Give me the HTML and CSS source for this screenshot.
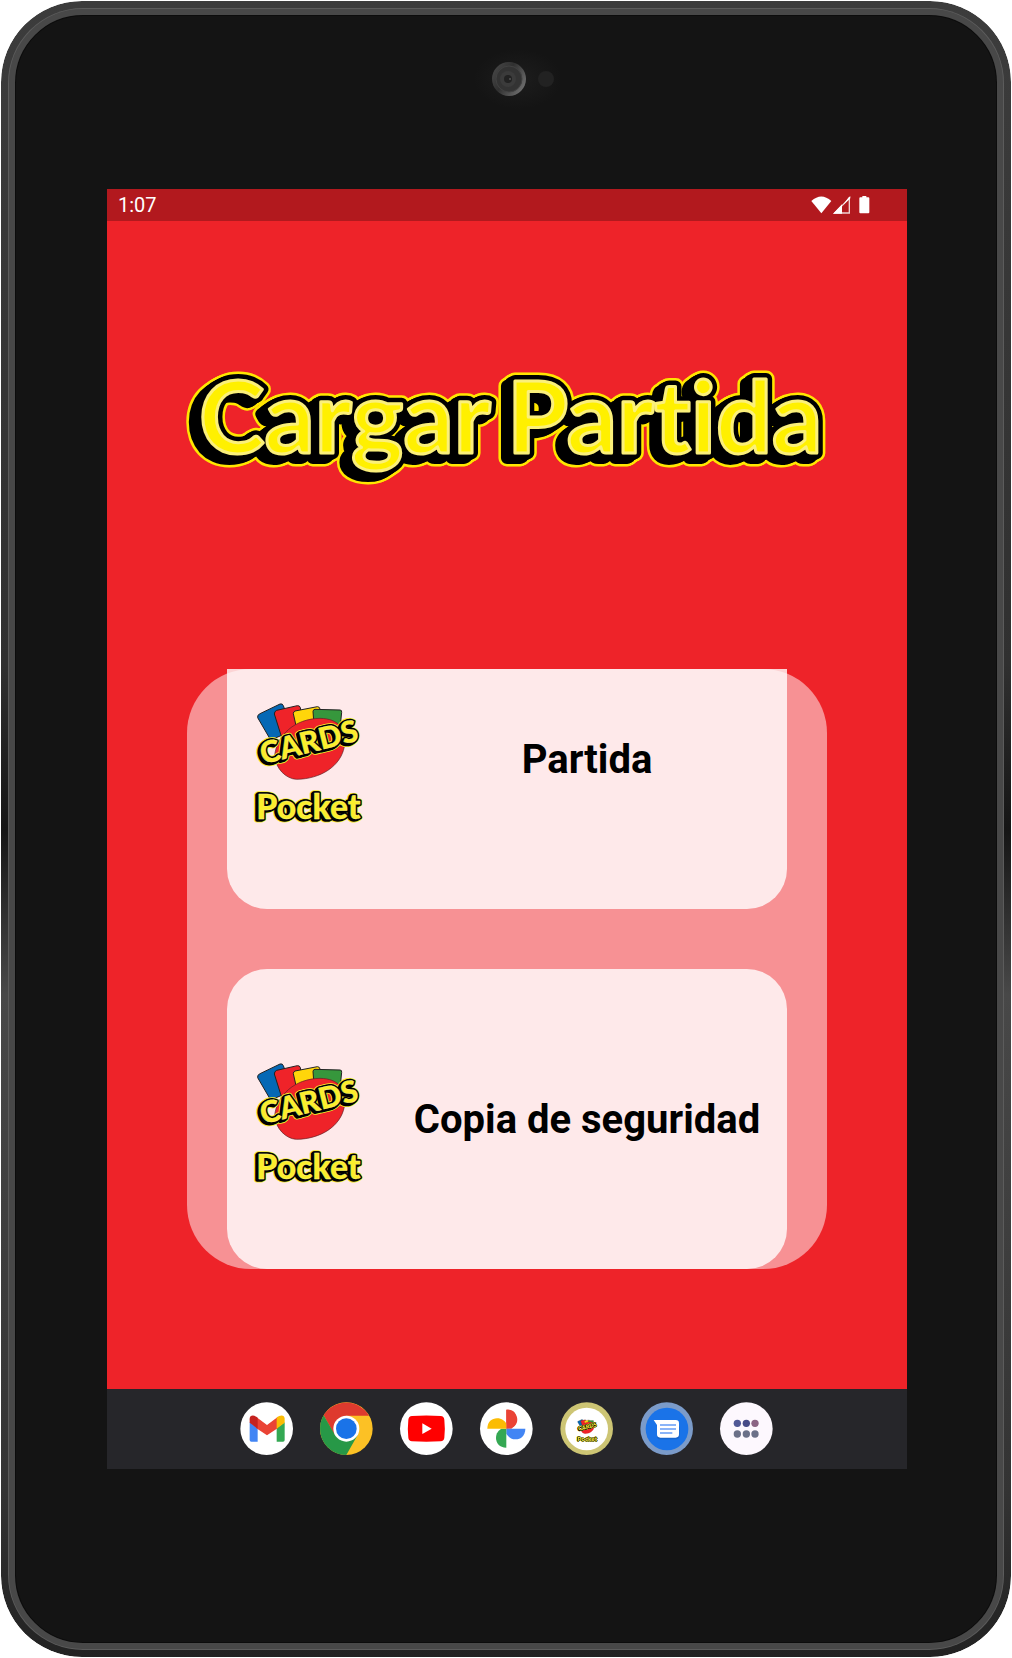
FILE: index.html
```
<!DOCTYPE html>
<html lang="es">
<head>
<meta charset="utf-8">
<meta name="viewport" content="width=device-width, initial-scale=1">
<title>Cargar Partida</title>
<link rel="stylesheet" href="styles.css">
</head>
<body>
<div class="device">
  <div class="bezel">
    <div class="camera-bar">
      <svg class="camera" viewBox="-18 0 110 80" aria-hidden="true">
        <defs>
          <radialGradient id="glow"><stop offset="0" stop-color="#1d1d1d"/><stop offset="1" stop-color="#141414"/></radialGradient>
          <linearGradient id="ring" x1="0" y1="0" x2="1" y2="0.6"><stop offset="0" stop-color="#4c4c4c"/><stop offset="0.5" stop-color="#303030"/><stop offset="1" stop-color="#6a6a6a"/></linearGradient>
        </defs>
        <ellipse cx="48" cy="39" rx="44" ry="30" fill="url(#glow)"/>
        <circle cx="39" cy="39" r="17" fill="url(#ring)"/>
        <circle cx="39" cy="39" r="13" fill="#333" stroke="#424242"/>
        <circle cx="38" cy="39" r="8" fill="#3b3b3b"/>
        <circle cx="38" cy="39" r="4" fill="#222"/>
        <circle cx="40" cy="39" r="1" fill="#555"/>
        <circle cx="76" cy="39" r="8" fill="#222"/>
      </svg>
    </div>
    <div class="screen">
      <header class="status-bar">
        <time>1:07</time>
        <svg class="status-icons" viewBox="92 42 180 60" aria-hidden="true">
          <path fill="#fff" d="M93 60Q123 33 153 60L123 97Z"/>
          <path fill="none" stroke="#fff" stroke-opacity=".8" stroke-width="4" d="M163 96H207V52Z"/>
          <path fill="#fff" d="M158 98L185 70V98ZM205 49L210 46V52L188 72Z"/>
          <path fill="#fff" d="M246 45h12v4h6q3 0 3 3v42q0 3-3 3h-24q-3 0-3-3V52q0-3 3-3h6Z"/>
        </svg>
      </header>
      <main class="app">
        <h1 class="title">
          <svg class="title-art" viewBox="179 360 656 140">
            <g class="halo">
              <use href="#title-text"/><use href="#title-text" x="-2" y="1"/><use href="#title-text" x="-4" y="2"/><use href="#title-text" x="-6" y="4"/><use href="#title-text" x="-8" y="5"/>
            </g>
            <g class="depth">
              <use href="#title-text"/><use href="#title-text" x="-2" y="1"/><use href="#title-text" x="-4" y="2"/><use href="#title-text" x="-6" y="4"/><use href="#title-text" x="-8" y="5"/>
            </g>
            <g class="face"><text id="title-text" y="453"><tspan x="199">Cargar</tspan> <tspan x="507">Partida</tspan></text></g>
          </svg>
        </h1>
        <section class="saves">
          <button class="save" type="button">
            <svg class="logo" viewBox="213 105 336 384" aria-hidden="true">
              <g id="logo">
                <g stroke="#222" stroke-width="3">
                  <path fill="#0568b5" d="M240 161L300 132Q308 130 310 137L338 212L272 240L233 173Q231 165 240 161Z"/>
                  <path fill="#ef2329" d="M290 151L352 137Q359 136 361 143L372 205L305 232L283 162Q283 154 290 151Z"/>
                  <path fill="#ffd50a" d="M345 153L412 140Q419 140 420 147L417 205L352 215L340 161Q340 155 345 153Z"/>
                  <path fill="#36973c" d="M405 148L480 150Q486 150 485 157L480 205L402 195L399 154Q400 148 405 148Z"/>
                </g>
                <path fill="#ef2329" stroke="#5b2025" stroke-width="2" d="M284 287C290 225 345 176 420 175C475 176 500 205 493 260C482 320 420 357 350 358C318 357 286 325 284 287Z"/>
                <g class="small-halo"><use href="#cards"/><use href="#cards" x="-3" y="2"/><use href="#cards" x="-6" y="5"/></g>
                <g class="small-depth"><use href="#cards"/><use href="#cards" x="-3" y="2"/><use href="#cards" x="-6" y="5"/></g>
                <g class="small-face"><g id="cards"><text class="cards-text" transform="translate(249 313) rotate(-14)">CARDS</text></g></g>
                <g class="small-halo"><use href="#pocket"/><use href="#pocket" x="-3" y="2"/><use href="#pocket" x="-6" y="5"/></g>
                <g class="small-depth"><use href="#pocket"/><use href="#pocket" x="-3" y="2"/><use href="#pocket" x="-6" y="5"/></g>
                <g class="small-face"><g id="pocket"><text class="pocket-text" x="229" y="476">Pocket</text></g></g>
              </g>
            </svg>
            <span class="save-name">Partida</span>
          </button>
          <button class="save" type="button">
            <svg class="logo" viewBox="213 105 336 384" aria-hidden="true"><use href="#logo"/></svg>
            <span class="save-name">Copia de seguridad</span>
          </button>
        </section>
      </main>
      <nav class="dock">
        <button class="dock-app" type="button" aria-label="Gmail">
          <svg viewBox="61 67 159 159"><circle cx="141" cy="147" r="79" fill="#fff"/>
            <path fill="#4285f4" d="M90 128L114 145V186H95Q90 186 90 181Z"/>
            <path fill="#34a853" d="M171 145L195 128V181Q195 186 190 186H171Z"/>
            <path fill="#ea4335" d="M109 111L142 136L175 111V145L142 167L109 145Z"/>
            <path fill="#c5221f" d="M90 121C88 105 103 104 114 114V147L90 129Z"/>
            <path fill="#fbbc04" d="M195 121C197 105 182 104 171 114V147L195 129Z"/>
          </svg>
        </button>
        <button class="dock-app" type="button" aria-label="Chrome">
          <svg viewBox="302 67 159 159"><circle cx="381" cy="147" r="79" fill="#fcc125"/>
            <path fill="#de3a2e" d="M313 107A79 79 0 0 1 449 108H381L346 166Z"/>
            <path fill="#279847" d="M313 107A79 79 0 0 0 381 226L415 166L381 174L347 166Z"/>
            <circle cx="381" cy="147" r="39" fill="#fff"/><circle cx="381" cy="147" r="31" fill="#1a73e8"/>
          </svg>
        </button>
        <button class="dock-app" type="button" aria-label="YouTube">
          <svg viewBox="542 67 159 159"><circle cx="621" cy="147" r="79" fill="#fff"/>
            <path fill="#f00" d="M578 109Q621 106 664 109Q674 110 675 120Q678 147 675 174Q674 184 664 185Q621 187 578 185Q568 184 567 174Q564 147 567 120Q568 110 578 109Z"/>
            <path fill="#fff" d="M609 131L637 147L609 163Z"/>
          </svg>
        </button>
        <button class="dock-app" type="button" aria-label="Fotos">
          <svg viewBox="-28 67 159 159"><circle cx="51" cy="147" r="79" fill="#fff"/>
            <path fill="#ea4335" d="M51 147V90A29 29 0 0 1 73 141Z"/>
            <path fill="#ea4335" d="M51 90C72 90 82 104 82 119C82 134 74 142 66 147H51Z"/>
            <path fill="#4285f4" d="M51 147H108C108 168 94 179 79 179C64 179 56 170 51 162Z"/>
            <path fill="#34a853" d="M51 147V204C30 204 20 190 20 175C20 160 28 152 36 147Z"/>
            <path fill="#fbbc04" d="M51 147H-6C-6 126 8 116 23 116C38 116 46 124 51 132Z"/>
          </svg>
        </button>
        <button class="dock-app" type="button" aria-label="Cards Pocket">
          <svg viewBox="210 66 159 159"><circle cx="290" cy="146" r="79" fill="#cdc574"/><circle cx="290" cy="147" r="64" fill="#fff"/>
            <svg x="259" y="113" width="64" height="73" viewBox="213 105 336 384"><use href="#logo"/></svg>
          </svg>
        </button>
        <button class="dock-app" type="button" aria-label="Mensajes">
          <svg viewBox="450 66 159 159"><circle cx="530" cy="146" r="79" fill="#7b9bc9"/><circle cx="531" cy="147" r="64" fill="#1a73e8"/>
            <path fill="#1558b0" opacity=".5" d="M501 140V170Q502 178 511 178H558Q568 177 569 168V140Z"/>
            <path fill="#fff" d="M491 120H557Q567 120 567 130V163Q567 173 557 173H511Q501 173 501 163V135Z"/>
            <path stroke="#8ab4f8" stroke-width="6" d="M510 135H558M510 147H558M510 159H547"/>
          </svg>
        </button>
        <button class="dock-app" type="button" aria-label="Todas las aplicaciones">
          <svg viewBox="692 67 159 159"><circle cx="771" cy="147" r="79" fill="#fdf8fe"/>
            <circle cx="744" cy="131" r="11" fill="#505896"/><circle cx="771" cy="131" r="11" fill="#464b87"/><circle cx="797" cy="131" r="11" fill="#8b6483"/>
            <circle cx="744" cy="163" r="11" fill="#6b7088"/><circle cx="771" cy="163" r="11" fill="#6b7088"/><circle cx="797" cy="163" r="11" fill="#6b7088"/>
          </svg>
        </button>
      </nav>
    </div>
  </div>
</div>
</body>
</html>
```
FILE: styles.css
```
* { box-sizing: border-box; }

body {
  margin: 0;
  background: #fff;
  font-family: Roboto, "Liberation Sans", sans-serif;
}

button {
  border: 0;
  padding: 0;
  background: none;
  font: inherit;
  color: inherit;
  cursor: pointer;
}

svg {
  display: block;
  overflow: visible;
}

.device {
  display: flex;
  min-height: 100vh;
  padding: 8px;
  border: 1px solid #fff;
  border-radius: 82px;
  background: linear-gradient(180deg, #3c3c3c 0%, #303030 40%, #151515 50%, #484848 60%, #333 90%, #222 100%);
  background-clip: padding-box;
}

.bezel {
  flex: 1;
  border: 6px solid #484848;
  border-radius: 74px;
  background: #141414;
  box-shadow: inset 0 0 0 1px #0c0c0c, 0 0 0 1px #5c5c5c;
  padding: 0 90px 174px 92px;
}

.camera-bar {
  height: 174px;
  padding-top: 25px;
}

.camera {
  width: 110px;
  height: 80px;
  margin: 0 auto;
}

.screen { background: #ee2329; }

.status-bar {
  display: flex;
  justify-content: space-between;
  align-items: center;
  height: 32px;
  padding: 0 36px 0 11px;
  background: #b2191e;
  color: #fff;
  font-size: 20px;
  line-height: 32px;
}

.status-icons {
  width: 60px;
  height: 20px;
}

.title {
  margin: 0;
  padding: 139px 72px 169px;
}

.title-art {
  width: 100%;
  font-family: Lato, "Open Sans", sans-serif;
  font-size: 99px;
  font-weight: 700;
  font-variant-ligatures: none;
  stroke-linejoin: round;
}

.halo { fill: #ffe600; stroke: #ffe600; stroke-width: 17px; }
.depth { fill: #000; stroke: #000; stroke-width: 12px; }
.face { fill: #fff000; stroke: #fbf07a; stroke-width: 3px; }

.saves {
  position: relative;
  display: flex;
  flex-direction: column;
  justify-content: flex-end;
  gap: 60px;
  height: 600px;
  margin: 0 80px 120px;
  padding: 0 40px;
  overflow: hidden;
}

.saves::before {
  content: "";
  position: absolute;
  inset: 0;
  border-radius: 64px;
  background: rgba(255, 255, 255, 0.5);
}

.save {
  position: relative;
  display: grid;
  grid-template-columns: 2fr 5fr;
  flex: none;
  align-items: center;
  justify-items: center;
  height: 300px;
  border-radius: 40px;
  background: rgba(255, 255, 255, 0.8);
}

.save-name {
  padding-top: 2px;
  font-size: 40px;
  font-weight: 700;
  line-height: 48px;
  color: #000;
}

.logo {
  width: 112px;
  height: 128px;
  font-family: Lato, "Open Sans", sans-serif;
  font-weight: 900;
  stroke-linejoin: round;
}

.small-halo { fill: #f5ee2a; stroke: #f5ee2a; stroke-width: 15px; }
.small-depth { fill: #000; stroke: #000; stroke-width: 10px; }
.small-face { fill: #fbee2c; stroke: #f4f1a0; stroke-width: 1px; }

.cards-text { font-size: 90px; }
.pocket-text { font-size: 101px; }

.dock {
  display: flex;
  justify-content: center;
  align-items: center;
  gap: 27px;
  height: 80px;
  padding: 0 2px 1px 0;
  background: #26262a;
}

.dock-app {
  width: 53px;
  height: 53px;
  border-radius: 50%;
}

.dock-app > svg {
  width: 100%;
  height: 100%;
  font-family: Lato, "Open Sans", sans-serif;
  font-weight: 900;
  stroke-linejoin: round;
}
```
